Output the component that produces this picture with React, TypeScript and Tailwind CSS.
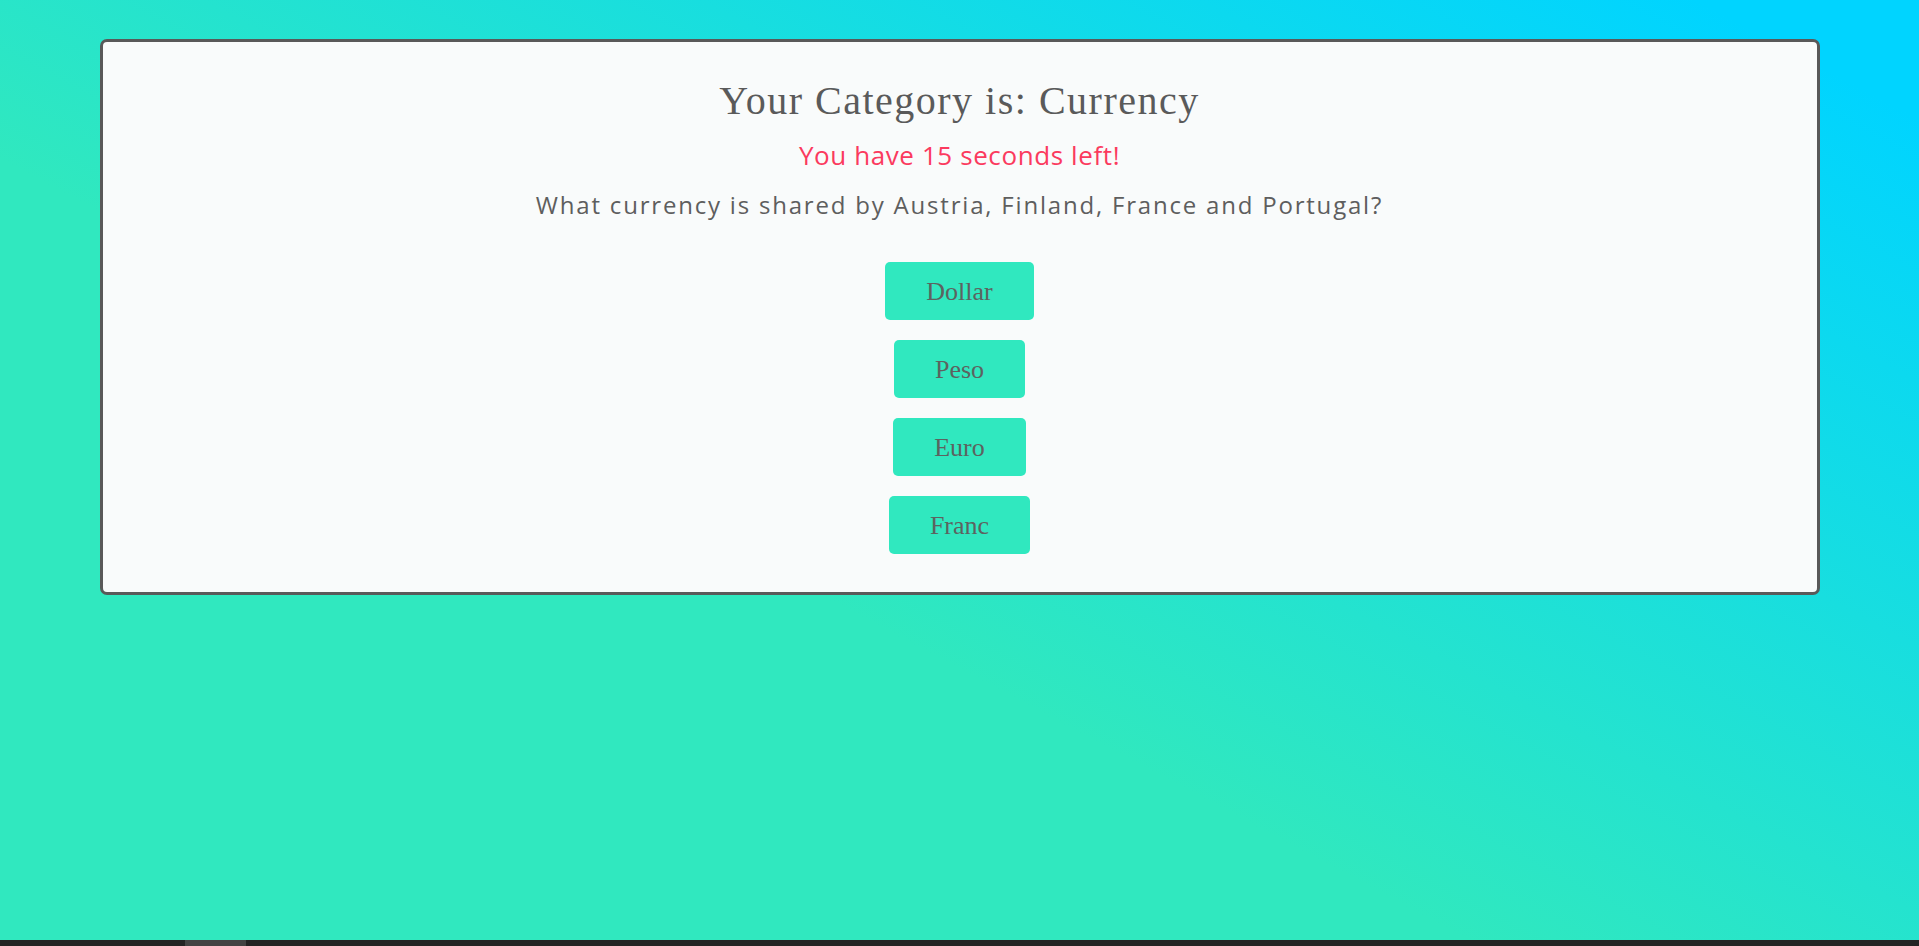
export default function App() {
  const answers = ["Dollar", "Peso", "Euro", "Franc"];
  return (
    <div className="h-[946px] w-full flex flex-col overflow-hidden bg-[linear-gradient(28deg,#30e8bf_40%,#00d4ff_94%)]">
      <div className="flex-1">
        <div className="mx-auto mt-[39px] w-[1720px] rounded-[7px] border-[3px] border-[#595959] bg-[#f9fbfb] pt-[35px] pb-[38px] flex flex-col items-center">
          <h1 className="font-['Liberation_Serif',serif] text-[40px] leading-[48px] tracking-[1.5px] text-[#5a5a5a]">
            Your Category is: Currency
          </h1>
          <p className="mt-[14px] font-['Open_Sans',sans-serif] text-[26px] leading-[32px] tracking-[0.6px] text-[#fb3a5e]">
            You have 15 seconds left!
          </p>
          <p className="mt-[19px] font-['Open_Sans',sans-serif] text-[24px] leading-[30px] tracking-[1.8px] text-[#5e5e5e]">
            What currency is shared by Austria, Finland, France and Portugal?
          </p>
          <div className="mt-[42px] flex flex-col items-center gap-[20px]">
            {answers.map((a) => (
              <button
                key={a}
                className="h-[58px] px-[41px] pt-[1px] rounded-[5px] bg-[#30e8bf] font-['Liberation_Serif',serif] text-[26px] leading-[30px] text-[#5c6360]"
              >
                {a}
              </button>
            ))}
          </div>
        </div>
      </div>
      <div className="h-[6px] bg-[#232323] flex shrink-0">
        <div className="ml-[185px] w-[61px] bg-[#434343]" />
      </div>
    </div>
  );
}
